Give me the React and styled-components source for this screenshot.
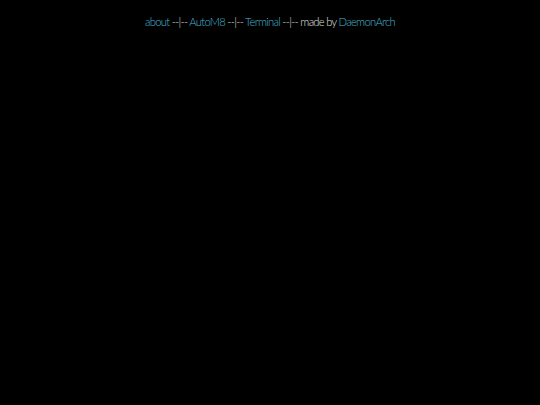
import styled, { createGlobalStyle } from "styled-components";

const GlobalStyle = createGlobalStyle`
  html, body {
    margin: 0;
    padding: 0;
    background: #000;
    height: 100%;
  }
  #root {
    min-height: 100vh;
  }
`;

const Page = styled.div`
  min-height: 100vh;
  background: #000;
  display: flex;
  flex-direction: column;
  align-items: center;
`;

const Nav = styled.nav`
  padding-top: 15px;
  font-family: Lato, "DejaVu Sans", sans-serif;
  font-weight: 300;
  font-size: 11.2px;
  letter-spacing: -0.7px;
  color: #e2e2e2;
  white-space: pre;
`;

const Link = styled.a`
  color: #45b8d2;
  text-decoration: none;
`;

function App() {
  return (
    <>
      <GlobalStyle />
      <Page>
        <Nav>
          <Link href="#">about</Link>
          {" --|-- "}
          <Link href="#">AutoM8</Link>
          {" --|-- "}
          <Link href="#">Terminal</Link>
          {" --|-- made by "}
          <Link href="#">DaemonArch</Link>
        </Nav>
      </Page>
    </>
  );
}

export default App;
